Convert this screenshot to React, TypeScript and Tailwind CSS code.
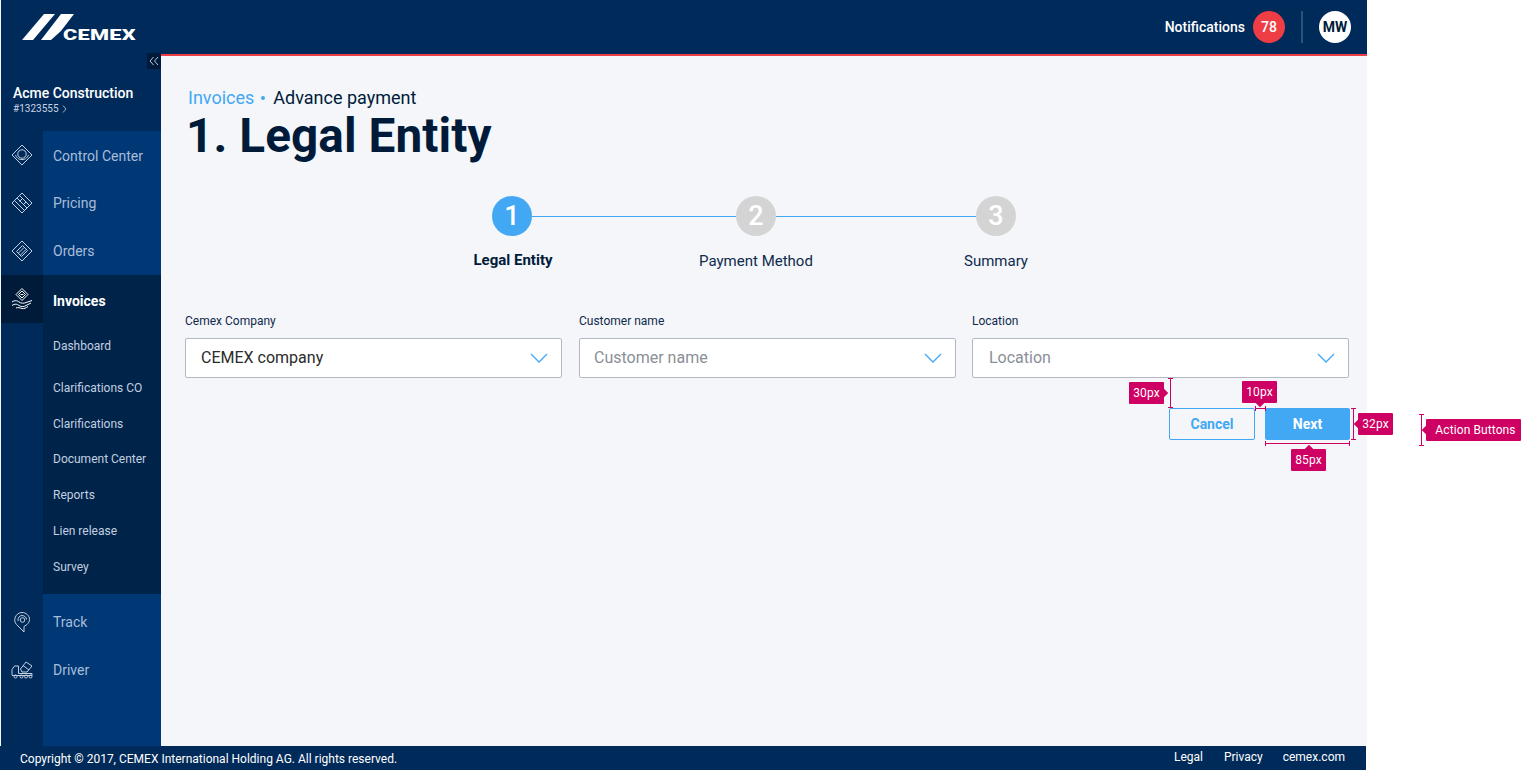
import { ReactNode } from "react"

const ControlIcon = () => (
  <svg width="22" height="22" viewBox="0 0 22 22" fill="none" stroke="#c3d0e0" strokeWidth="1">
    <path d="M11 1 L21 11 L11 21 L1 11 Z" />
    <circle cx="11" cy="10" r="4.200" />
    <path d="M4.500 11 C6 14.500 8 15.500 11 15.500 C14 15.500 16 14.500 17.500 11" />
  </svg>
)

const PricingIcon = () => (
  <svg width="22" height="22" viewBox="0 0 22 22" fill="none" stroke="#c3d0e0" strokeWidth="1">
    <path d="M11 1 L21 11 L11 21 L1 11 Z" />
    <path d="M8.500 3.500 L18.500 13.500 M6 6 L16 16 M3.500 8.500 L13.500 18.500" />
    <path d="M11.500 6.500 L8.500 9.500 M15 10 L12 13" />
  </svg>
)

const OrdersIcon = () => (
  <svg width="22" height="22" viewBox="0 0 22 22" fill="none" stroke="#c3d0e0" strokeWidth="1">
    <path d="M11 1 L21 11 L11 21 L1 11 Z" />
    <path d="M11.500 5.500 L16.500 10.500 L10.500 16.500 L5.500 11.500 Z" />
    <path d="M13 7.500 L7.500 13 M15 9.500 L9.500 15" />
  </svg>
)

const InvoicesIcon = () => (
  <svg width="22" height="22" viewBox="0 0 22 22" fill="none" stroke="#ffffff" strokeWidth="1">
    <path d="M11 0.500 L17 6.500 L11 12.500 L5 6.500 Z" />
    <path d="M11 3 L14.500 6.500 L11 10 L7.500 6.500 Z" />
    <path d="M9.500 6.500 L12.500 6.500" />
    <path d="M1 14 C4 12 6 12.500 8 14 C10 15.500 13 15.500 15 14.500 L21 12.500" />
    <path d="M1 17.500 C4 15.500 6 16 8 17.500 C10 19 13 19 15 17.500 L20 15" />
    <path d="M5 20 C7 19 9 20 11 20.500 C13 21 15 20 17 18.500" />
  </svg>
)

const TrackIcon = () => (
  <svg width="18" height="22" viewBox="0 0 18 22" fill="none" stroke="#c3d0e0" strokeWidth="1">
    <path d="M11 21 L3.500 13.500 C1.500 11.500 1.500 8.500 2 7 C3 3.500 6 1.500 9 1.500 C13 1.500 16.500 4.500 16.500 8.500 C16.500 10.500 15.500 12 14 13.500 L11 15.500 Z" />
    <path d="M5 10 C4.500 7 6.500 4.500 9 4.500 C11.500 4.500 13.500 6.500 13.500 8.500" />
    <circle cx="9.500" cy="9" r="2.300" />
  </svg>
)

const DriverIcon = () => (
  <svg width="22" height="18" viewBox="0 0 22 18" fill="none" stroke="#c3d0e0" strokeWidth="1">
    <path d="M1 14 V8.500 L3.500 5 H7.500 V12.500 H21 V14.500 H1" />
    <path d="M9.500 8 L15 1 L21 5 L16 11 H11 Z" />
    <path d="M12 4.500 L18 9" />
    <circle cx="4.500" cy="15.500" r="1.500" />
    <circle cx="10.500" cy="15.500" r="1.500" />
    <circle cx="15" cy="15.500" r="1.500" />
    <circle cx="19.500" cy="15.500" r="1.500" />
  </svg>
)

function Chevron() {
  return (
    <svg width="18" height="10" viewBox="0 0 18 10" fill="none" stroke="#42a8f4" strokeWidth="1.300">
      <path d="M1 1 L9 9 L17 1" />
    </svg>
  )
}

function NavRow({ icon, label, labelPad = "pt-[1px]" }: { icon: ReactNode; label: string; labelPad?: string }) {
  return (
    <div className="flex h-[48px]">
      <div className="flex w-[42px] items-center justify-center">{icon}</div>
      <div className={`flex flex-1 items-center pl-[10px] text-[14px] text-[#a9bdd8] ${labelPad}`}>{label}</div>
    </div>
  )
}

function Field({ label, value, placeholder, pad, gap = "" }: { label: string; value: string; placeholder?: boolean; pad: string; gap?: string }) {
  return (
    <div className={`w-[377px] ${gap}`}>
      <div className="h-[16px] text-[12px] leading-[16px] text-[#0f2a4d]">{label}</div>
      <div className={`mt-[9px] flex h-[40px] items-center justify-between rounded-[2px] border border-[#b3b8c4] bg-white pr-[5px] ${pad}`}>
        <span className={placeholder ? "text-[16px] text-[#8a8f98]" : "text-[16px] text-[#2b2b2b]"}>{value}</span>
        <span className="mr-[8px] flex"><Chevron /></span>
      </div>
    </div>
  )
}

function Step({ n, active }: { n: number; active?: boolean }) {
  return (
    <div className={`flex h-[40px] w-[40px] shrink-0 items-center justify-center rounded-full text-[27px] font-medium text-white ${active ? "bg-[#42a8f4]" : "bg-[#d4d4d4]"}`}>
      {n}
    </div>
  )
}

// pink redline tag, sits over the page
function Tag({ text, className, pointer }: { text: string; className: string; pointer: string }) {
  return (
    <div className={`absolute flex h-[22px] items-center justify-center rounded-[1px] bg-[#cf0063] text-[12px] tracking-[0.1px] text-white ${className}`}>
      {text}
      <span className={`absolute h-[6px] w-[6px] rotate-45 bg-[#cf0063] ${pointer}`} />
    </div>
  )
}

function VBracket({ className }: { className: string }) {
  return (
    <div className={`absolute w-[5px] border-y border-[#cf0063] ${className}`}>
      <div className="mx-auto h-full w-px bg-[#cf0063]" />
    </div>
  )
}

function HBracket({ className }: { className: string }) {
  return (
    <div className={`absolute h-[5px] border-x border-[#cf0063] ${className}`}>
      <div className="mt-[2px] h-px w-full bg-[#cf0063]" />
    </div>
  )
}

export default function App() {
  const subItems = ["Clarifications CO", "Clarifications", "Document Center", "Reports", "Lien release", "Survey"]

  return (
    <div className="relative h-[770px] w-[1521px] overflow-hidden bg-white font-['Roboto',sans-serif]">
      <div className="flex h-[770px] w-[1367px] flex-col">
        <header className="flex h-[54px] shrink-0 items-center justify-between border-l border-[#f4f6f9] bg-[#002a59] pr-[16px]">
          <div className="ml-[21px] flex h-[28px] items-end">
            <svg width="53" height="27" viewBox="0 0 53 27" fill="#ffffff" className="shrink-0">
              <polygon points="0,26 22,0 33,0 11,26" />
              <polygon points="19,26 39,0 52,0 39,17 29,26" />
            </svg>
            <span className="-ml-[12px] origin-left scale-x-[1.55] text-[14px] leading-[12px] font-black tracking-[0.2px] text-white">CEMEX</span>
          </div>
          <div className="flex items-center">
            <span className="text-[14px] font-medium text-white">Notifications</span>
            <div className="ml-[8px] flex h-[32px] w-[32px] items-center justify-center rounded-full bg-[#ee3d45] text-[14px] font-medium text-white">78</div>
            <div className="ml-[16px] h-[32px] w-[2px] bg-[#2f5079]" />
            <div className="ml-[16px] flex h-[32px] w-[32px] items-center justify-center rounded-full bg-white text-[14px] font-bold text-[#001b3a]">MW</div>
          </div>
        </header>

        <div className="flex min-h-0 flex-1">
          <aside className="relative flex w-[161px] shrink-0 flex-col border-l border-[#f4f6f9] bg-[#002a59]">
            <div className="absolute top-[-1px] right-0 flex h-[16px] w-[14px] items-center justify-center bg-[#001b3a]">
              <svg width="10" height="10" viewBox="0 0 10 10" fill="none" stroke="#b9c6d8" strokeWidth="1">
                <path d="M4.500 1 L1 5 L4.500 9 M9 1 L5.500 5 L9 9" />
              </svg>
            </div>
            <div className="h-[77px] pt-[31px] pl-[12px]">
              <div className="text-[14px] leading-[16px] font-medium tracking-[-0.02px] text-white">Acme Construction</div>
              <div className="mt-[1px] flex items-center gap-[3px] text-[10px] leading-[14px] text-[#c9d4e2]">
                #1323555
                <svg width="5" height="8" viewBox="0 0 5 8" fill="none" stroke="#c9d4e2" strokeWidth="0.800">
                  <path d="M1 0.500 L4 4 L1 7.500" />
                </svg>
              </div>
            </div>

            <div className="flex flex-1 flex-col bg-[linear-gradient(to_right,#002a59_42px,#003876_42px)]">
              <NavRow icon={<ControlIcon />} label="Control Center" labelPad="pt-[3px]" />
              <NavRow icon={<PricingIcon />} label="Pricing" />
              <NavRow icon={<OrdersIcon />} label="Orders" />

              <div className="bg-[linear-gradient(to_right,#002a59_42px,#002349_42px)]">
                <div className="flex h-[48px]">
                  <div className="flex w-[42px] items-center justify-center bg-[#001b3a]"><InvoicesIcon /></div>
                  <div className="flex flex-1 items-center pt-[4px] pl-[10px] text-[14px] font-bold text-white">Invoices</div>
                </div>
                <div className="ml-[42px] pt-[5px] pb-[9px] pl-[10px] text-[12px] text-[#c3d0e0]">
                  <div className="flex h-[36px] items-center">Dashboard</div>
                  <div className="mt-[6px]">
                    {subItems.map((item) => (
                      <div key={item} className="flex h-[35.8px] items-center">{item}</div>
                    ))}
                  </div>
                </div>
              </div>

              <div className="h-[4px]" />
              <NavRow icon={<TrackIcon />} label="Track" />
              <NavRow icon={<DriverIcon />} label="Driver" />
            </div>
          </aside>

          <main className="min-w-0 flex-1 border-t-2 border-[#ee3d45] bg-[#f4f6f9] pt-[30px] pr-[18px] pl-[24px]">
            <div className="flex h-[24px] items-center pl-[3px] text-[18px] leading-[24px]">
              <span className="text-[#42a8f4]">Invoices</span>
              <span className="mx-[7px] h-[4px] w-[4px] rounded-full bg-[#42a8f4]" />
              <span className="ml-[1px] text-[#001b3a]">Advance payment</span>
            </div>
            <h1 className="h-[52px] pl-[1px] text-[47.7px] leading-[52px] font-bold tracking-[0.08px] text-[#001b3a]">1. Legal Entity</h1>

            <div className="mt-[34px] ml-[307px] flex items-center">
              <Step n={1} active />
              <div className="h-px w-[204px] bg-[#42a8f4]" />
              <Step n={2} />
              <div className="h-px w-[200px] bg-[#42a8f4]" />
              <Step n={3} />
            </div>
            <div className="mt-[15px] ml-[248px] flex h-[20px] items-center text-[15px] text-[#0f2a4d]">
              <div className="w-[160px] -translate-y-[1px] text-center font-bold text-[#001b3a]">Legal Entity</div>
              <div className="ml-[83px] w-[160px] text-center">Payment Method</div>
              <div className="ml-[80px] w-[160px] text-center">Summary</div>
            </div>

            <div className="mt-[42px] flex">
              <Field label="Cemex Company" value="CEMEX company" pad="pl-[15px]" />
              <Field label="Customer name" value="Customer name" placeholder pad="pl-[14px]" gap="ml-[17px]" />
              <Field label="Location" value="Location" placeholder pad="pl-[16px]" gap="ml-[16px]" />
            </div>

            <div className="mt-[30px] -mr-[1px] flex justify-end gap-[10px]">
              <button className="h-[32px] w-[86px] rounded-[2px] border border-[#42a8f4] text-[14px] font-bold text-[#42a8f4]">Cancel</button>
              <button className="h-[32px] w-[85px] rounded-[2px] bg-[#42a8f4] text-[14px] font-bold text-white">Next</button>
            </div>
          </main>
        </div>

        <footer className="relative flex h-[24px] w-[1366px] shrink-0 items-center justify-between bg-[#002a59] pr-[21px] pl-[20px] text-[12px] text-white">
          <span className="translate-y-[1px]">Copyright © 2017, CEMEX International Holding AG. All rights reserved.</span>
          <div className="flex -translate-y-[1px]">
            <span>Legal</span>
            <span className="ml-[21px]">Privacy</span>
            <span className="ml-[20px]">cemex.com</span>
          </div>
        </footer>
      </div>

      <VBracket className="top-[378px] left-[1168px] h-[30px]" />
      <Tag text="30px" className="top-[382px] left-[1129px] w-[35px]" pointer="top-[8px] right-[-3px]" />
      <HBracket className="top-[406px] left-[1255px] w-[11px]" />
      <Tag text="10px" className="top-[381px] left-[1242px] w-[35px]" pointer="bottom-[-3px] left-[15px]" />
      <VBracket className="top-[408px] left-[1351px] h-[32px]" />
      <Tag text="32px" className="top-[413px] left-[1358px] w-[35px]" pointer="top-[8px] left-[-3px]" />
      <HBracket className="top-[441px] left-[1265px] w-[85px]" />
      <Tag text="85px" className="top-[449px] left-[1291px] w-[35px]" pointer="top-[-3px] left-[15px]" />
      <VBracket className="top-[414px] left-[1419px] h-[32px]" />
      <Tag text="Action Buttons" className="top-[419px] left-[1426px] w-[95px] pl-[4px]" pointer="top-[8px] left-[-3px]" />
    </div>
  )
}
